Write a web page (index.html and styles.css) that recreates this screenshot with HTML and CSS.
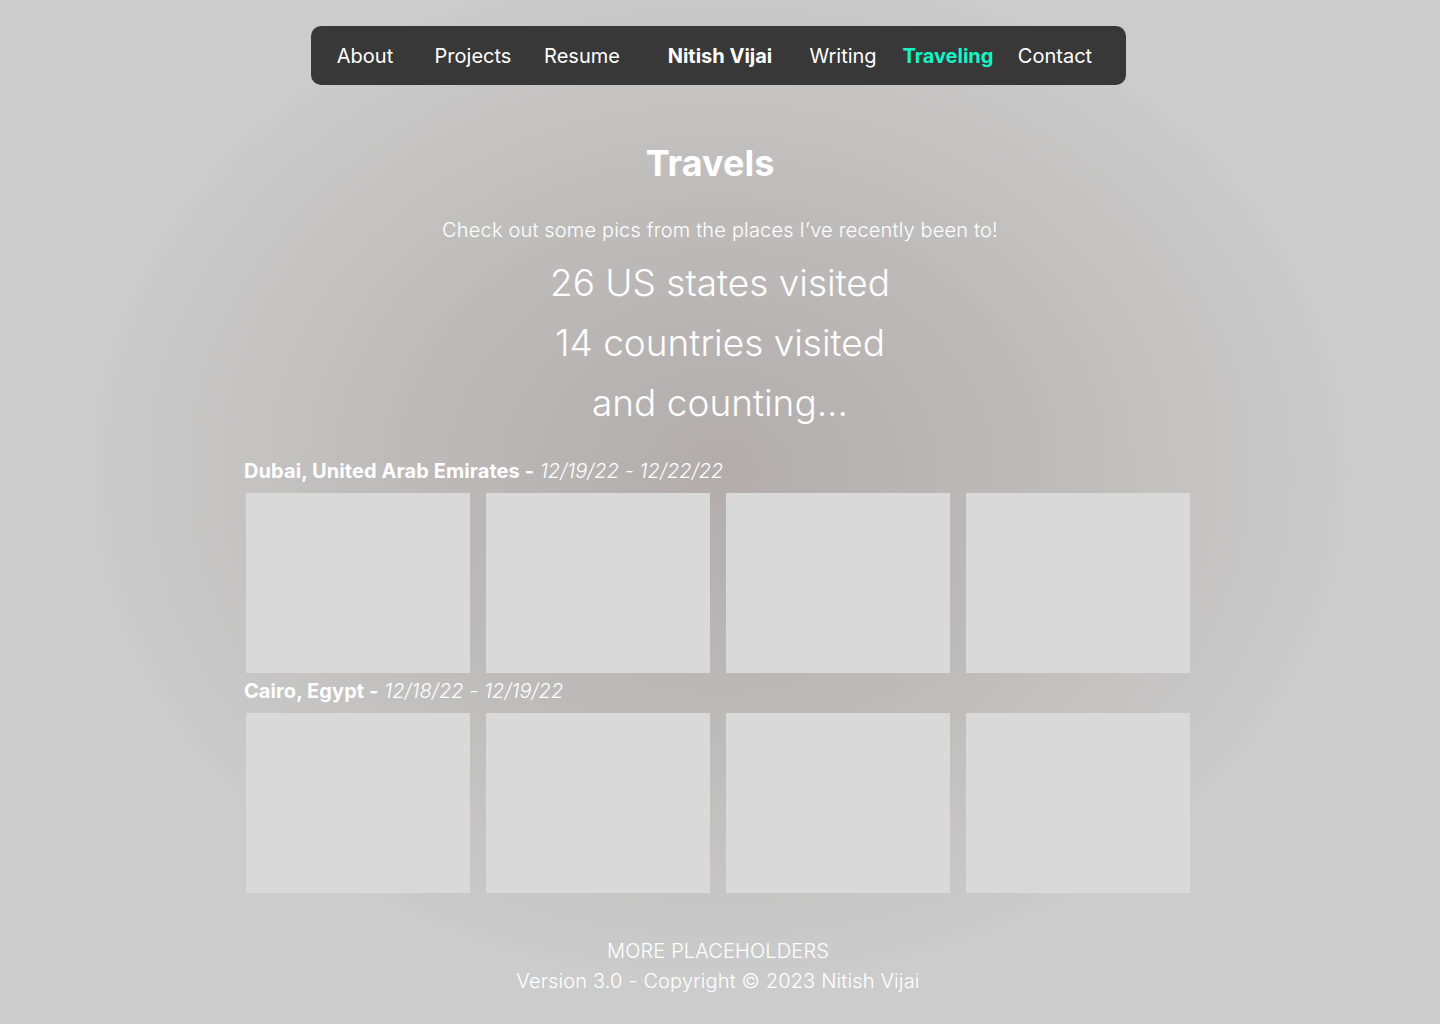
FILE: index.html
```html
<!DOCTYPE html>
<html lang="en">
<head>
<meta charset="utf-8">
<title>Travels - Nitish Vijai</title>
<link rel="stylesheet" href="styles.css">
</head>
<body>
<header class="nav-wrap">
  <nav class="nav">
    <a class="nav-item" href="#">About</a>
    <a class="nav-item" href="#">Projects</a>
    <a class="nav-item" href="#">Resume</a>
    <a class="nav-item nav-brand" href="#">Nitish Vijai</a>
    <a class="nav-item" href="#">Writing</a>
    <a class="nav-item nav-active" href="#">Traveling</a>
    <a class="nav-item" href="#">Contact</a>
  </nav>
</header>
<main class="main">
  <h1 class="title">Travels</h1>
  <p class="subtitle">Check out some pics from the places I’ve recently been to!</p>
  <div class="stats">
    <p class="stat">26 US states visited</p>
    <p class="stat">14 countries visited</p>
    <p class="stat">and counting...</p>
  </div>
  <section class="trips">
    <div class="trip">
      <h2 class="trip-title"><strong>Dubai, United Arab Emirates -</strong> <em>12/19/22 - 12/22/22</em></h2>
      <div class="photos">
        <div class="photo"></div>
        <div class="photo"></div>
        <div class="photo"></div>
        <div class="photo"></div>
      </div>
    </div>
    <div class="trip">
      <h2 class="trip-title"><strong>Cairo, Egypt -</strong> <em>12/18/22 - 12/19/22</em></h2>
      <div class="photos">
        <div class="photo"></div>
        <div class="photo"></div>
        <div class="photo"></div>
        <div class="photo"></div>
      </div>
    </div>
  </section>
</main>
<footer class="footer">
  <p>MORE PLACEHOLDERS</p>
  <p>Version 3.0 - Copyright © 2023 Nitish Vijai</p>
</footer>
</body>
</html>
```
FILE: styles.css
```css
* { box-sizing: border-box; }

html, body {
  margin: 0;
  padding: 0;
}

body {
  min-height: 1024px;
  font-family: Inter, "Noto Sans", sans-serif;
  color: #ffffff;
  background: radial-gradient(ellipse 640px 520px at 50% 46%, #b2adab 0%, #bcb9b8 45%, #cccccc 100%);
  background-color: #cccccc;
}

.nav-wrap {
  display: flex;
  justify-content: center;
  padding: 26px 3px 0 0;
}

.nav {
  width: 815px;
  height: 59px;
  background: #383838;
  border-radius: 10px;
  display: grid;
  grid-template-columns: 108px 108px 110px 166px 80px 130px 84px;
  align-items: center;
  padding: 1px 29px 0 0;
}

.nav-item {
  color: #ffffff;
  text-decoration: none;
  font-size: 20px;
  text-align: center;
  white-space: nowrap;
}

.nav-brand { font-weight: 700; }

.nav-active {
  font-weight: 700;
  color: #14f5c6;
}

.main {
  display: flex;
  flex-direction: column;
  align-items: center;
}

.title {
  margin: 53px 0 0;
  padding-right: 20px;
  font-size: 36px;
  line-height: 50px;
  font-weight: 700;
}

.subtitle {
  margin: 30px 0 0;
  font-size: 20px;
  line-height: 24px;
  font-weight: 300;
  letter-spacing: 0.17px;
}

.stats {
  margin-top: 11px;
  text-align: center;
}

.stat {
  margin: 0;
  font-size: 37px;
  line-height: 60px;
  font-weight: 300;
}

.trips {
  width: 948px;
  margin: 26px 4px 0 0;
}

.trip-title {
  margin: 0 0 10px;
  font-size: 20px;
  line-height: 24px;
  font-weight: 400;
  letter-spacing: 0.08px;
}

.trip + .trip .trip-title {
  margin-top: 6px;
}

.trip-title strong { font-weight: 700; }
.trip-title em { font-style: italic; font-weight: 300; }

.photos {
  display: grid;
  grid-template-columns: repeat(4, 224px);
  gap: 16px;
  padding: 0 2px;
}

.photo {
  height: 180px;
  background: #d9d9d9;
}

.footer {
  margin-top: 43px;
  padding-right: 4px;
  text-align: center;
  font-size: 20px;
  line-height: 30px;
  font-weight: 300;
  letter-spacing: 0.15px;
}

.footer p { margin: 0; }
```
